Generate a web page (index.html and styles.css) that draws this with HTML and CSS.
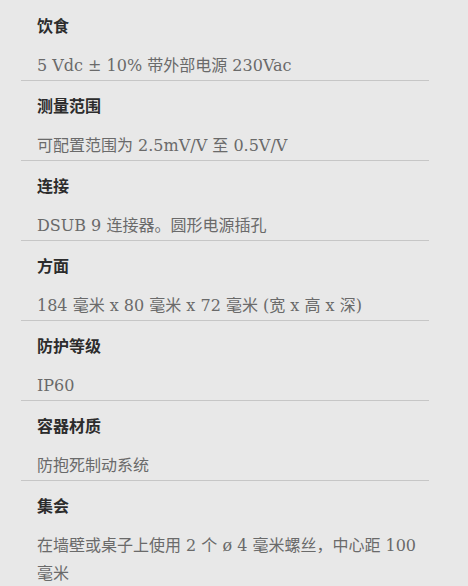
FILE: index.html
```html
<!DOCTYPE html>
<html lang="zh-CN">
<head>
  <meta charset="UTF-8">
  <meta name="viewport" content="width=device-width, initial-scale=1.0">
  <title>技术规格</title>
  <link rel="stylesheet" href="styles.css">
</head>
<body>
  <!-- Specs list -->
  <dl class="spec-list">
    <div class="spec-item">
      <dt class="spec-name">饮食</dt>
      <dd class="spec-value">5 Vdc ± 10% 带外部电源 230Vac</dd>
    </div>
    <div class="spec-item">
      <dt class="spec-name">测量范围</dt>
      <dd class="spec-value">可配置范围为 2.5mV/V 至 0.5V/V</dd>
    </div>
    <div class="spec-item">
      <dt class="spec-name">连接</dt>
      <dd class="spec-value">DSUB 9 连接器。圆形电源插孔</dd>
    </div>
    <div class="spec-item">
      <dt class="spec-name">方面</dt>
      <dd class="spec-value">184 毫米 x 80 毫米 x 72 毫米 (宽 x 高 x 深)</dd>
    </div>
    <div class="spec-item">
      <dt class="spec-name">防护等级</dt>
      <dd class="spec-value">IP60</dd>
    </div>
    <div class="spec-item">
      <dt class="spec-name">容器材质</dt>
      <dd class="spec-value">防抱死制动系统</dd>
    </div>
    <div class="spec-item">
      <dt class="spec-name">集会</dt>
      <dd class="spec-value">在墙壁或桌子上使用 2 个 ø 4 毫米螺丝，中心距 100 毫米</dd>
    </div>
  </dl>
</body>
</html>
```

FILE: styles.css
```css
:root {
  --background: #e8e8e8;
  --divider: #c6c6c6;
  --heading: #2c2c2c;
  --text-muted: #6a6a6a;
}

* {
  margin: 0;
  padding: 0;
  box-sizing: border-box;
}

body {
  background: var(--background);
  font-family: "DejaVu Serif", "Noto Sans CJK SC", serif;
  color: var(--text-muted);
}

/* Specs list */
.spec-list {
  width: 408px;
  margin-left: 21px;
  padding-top: 1px;
}

.spec-item {
  padding: 12px 8px 0 16px;
  border-bottom: 1px solid var(--divider);
}

.spec-name {
  font-family: "Noto Sans CJK SC", sans-serif;
  font-size: 16px;
  font-weight: 700;
  line-height: 24px;
  color: var(--heading);
}

.spec-value {
  margin-top: 15px;
  font-size: 16px;
  line-height: 28px;
}
```
